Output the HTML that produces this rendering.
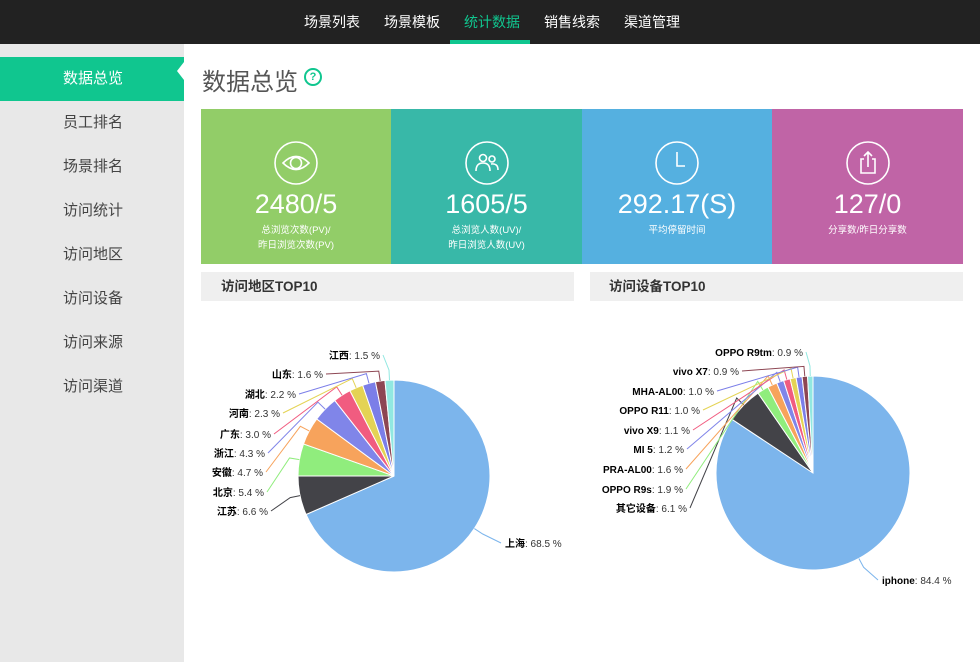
<!DOCTYPE html>
<html><head><meta charset="utf-8"><style>
*{margin:0;padding:0;box-sizing:border-box}
body{width:980px;height:662px;overflow:hidden;background:#fff;font-family:"Liberation Sans","Noto Sans CJK SC",sans-serif;position:relative}
.top{position:absolute;left:0;top:0;width:980px;height:44px;background:#222}
.top span{position:absolute;top:12px;color:#fff;font-size:14px}
.top .act{color:#10c68f}
.ul{position:absolute;left:450px;top:40px;width:80px;height:4px;background:#10c68f}
.side{position:absolute;left:0;top:44px;width:184px;height:618px;background:#e8e8e8}
.side div{position:absolute;left:0;width:184px;height:44px;line-height:44px;padding-left:63px;font-size:15px;color:#444}
.side .on{background:#10c68f;color:#fff}
.title{position:absolute;left:202px;top:62px;font-size:24px;color:#555}
.q{position:absolute;left:304px;top:68px;width:18px;height:18px;border:2px solid #10c68f;border-radius:50%;color:#10c68f;font-size:11px;text-align:center;line-height:14px;font-weight:bold}
.card{position:absolute;top:109px;height:155px;color:#fff;text-align:center}
.card svg{position:absolute;left:50%;top:32px;margin-left:-22px}
.num{position:absolute;left:0;right:0;top:80px;font-size:27px}
.sub{position:absolute;left:0;right:0;top:114px;font-size:9.5px;line-height:15px}
.hd{position:absolute;top:272px;height:29px;background:#efefef;font-weight:bold;font-size:13.5px;color:#333;line-height:29px}
</style></head><body>
<div class="top">
<span style="left:304px">场景列表</span><span style="left:384px">场景模板</span><span class="act" style="left:464px">统计数据</span><span style="left:544px">销售线索</span><span style="left:624px">渠道管理</span>
</div><div class="ul"></div>
<div class="side">
<div class="on" style="top:13px">数据总览</div>
<div style="top:57px">员工排名</div>
<div style="top:101px">场景排名</div>
<div style="top:145px">访问统计</div>
<div style="top:189px">访问地区</div>
<div style="top:233px">访问设备</div>
<div style="top:277px">访问来源</div>
<div style="top:321px">访问渠道</div>
</div>
<svg style="position:absolute;left:176px;top:62px" width="10" height="18"><path d="M8 0 L1 9 L8 18 L10 18 L10 0Z" fill="#fff"/></svg>
<div class="title">数据总览</div><div class="q">?</div>

<div class="card" style="left:201px;width:190px;background:#92cd68">
<svg width="44" height="44" viewBox="0 0 44 44" fill="none" stroke="#fff" stroke-width="1.6"><circle cx="22" cy="22" r="21"/><path d="M9 22 Q22 9 35 22 Q22 35 9 22Z"/><circle cx="22" cy="22" r="5.5"/></svg>
<div class="num">2480/5</div><div class="sub">总浏览次数(PV)/<br>昨日浏览次数(PV)</div></div>
<div class="card" style="left:391px;width:191px;background:#38b8a8">
<svg width="44" height="44" viewBox="0 0 44 44" fill="none" stroke="#fff" stroke-width="1.6"><circle cx="22" cy="22" r="21"/><circle cx="18" cy="17" r="3.5"/><circle cx="27" cy="18" r="3"/><path d="M11 30 Q11 22 18 22 Q25 22 25 30"/><path d="M26 23 Q33 22 33 29"/></svg>
<div class="num">1605/5</div><div class="sub">总浏览人数(UV)/<br>昨日浏览人数(UV)</div></div>
<div class="card" style="left:582px;width:190px;background:#55b0e0">
<svg width="44" height="44" viewBox="0 0 44 44" fill="none" stroke="#fff" stroke-width="1.6"><circle cx="22" cy="22" r="21"/><path d="M22 11 V25 H30"/></svg>
<div class="num">292.17(S)</div><div class="sub">平均停留时间</div></div>
<div class="card" style="left:772px;width:191px;background:#c064a6">
<svg width="44" height="44" viewBox="0 0 44 44" fill="none" stroke="#fff" stroke-width="1.6"><circle cx="22" cy="22" r="21"/><path d="M18 18 H15 V32 H29 V18 H26"/><path d="M22 26 V11 M18 15 L22 11 L26 15"/></svg>
<div class="num">127/0</div><div class="sub">分享数/昨日分享数</div></div>

<div class="hd" style="left:201px;width:373px;padding-left:20px">访问地区TOP10</div>
<div class="hd" style="left:590px;width:373px;padding-left:19px">访问设备TOP10</div>

<svg id="ch" style="position:absolute;left:0;top:0" width="980" height="662"></svg>
<script>
var ns="http://www.w3.org/2000/svg",s=document.getElementById('ch');
function el(t,a,tx){var e=document.createElementNS(ns,t);for(var k in a)e.setAttribute(k,a[k]);if(tx!=null)e.textContent=tx;s.appendChild(e);return e;}
function pie(cx,cy,r,d){
 var a=0,sum=d.reduce(function(p,c){return p+c[1]},0);
 d.forEach(function(x){
  var a0=a,a1=a+x[1]/sum*2*Math.PI;a=a1;
  var p=function(an,rr){return[cx+rr*Math.sin(an),cy-rr*Math.cos(an)]};
  var P0=p(a0,r),P1=p(a1,r),lg=(a1-a0)>Math.PI?1:0;
  el('path',{d:'M'+cx+' '+cy+'L'+P0+'A'+r+' '+r+' 0 '+lg+' 1 '+P1+'Z',fill:x[2],stroke:'#fff','stroke-width':1});
  var m=(a0+a1)/2,Q0=p(m,r),Q1=p(m,r+10),lx=x[3],ly=x[4],right=x[5];
  var ex=right?lx-4:lx+3;
  el('path',{d:'M'+Q0+'L'+Q1+'L'+ex+' '+(ly-4),fill:'none',stroke:x[2],'stroke-width':1});
  var t=el('text',{x:lx,y:ly,'font-size':10,'text-anchor':right?'start':'end',fill:'#000'});
  var b=document.createElementNS(ns,'tspan');b.setAttribute('font-weight','bold');b.textContent=x[0];t.appendChild(b);
  var n=document.createElementNS(ns,'tspan');n.setAttribute('fill','#333');n.textContent=': '+x[1].toFixed(1)+' %';t.appendChild(n);
 });
}
pie(394,476,96,[
['上海',68.5,'#7cb5ec',505,547,1],['江苏',6.6,'#434348',268,515],['北京',5.4,'#90ed7d',264,496],['安徽',4.7,'#f7a35c',263,476],
['浙江',4.3,'#8085e9',265,457],['广东',3.0,'#f15c80',271,438],['河南',2.3,'#e4d354',280,417],['湖北',2.2,'#7b7ee8',296,398],
['山东',1.6,'#8d4653',323,378],['江西',1.5,'#91e8e1',380,359]]);
pie(813,473,97,[
['iphone',84.4,'#7cb5ec',882,584,1],['其它设备',6.1,'#434348',687,512],['OPPO R9s',1.9,'#90ed7d',683,493],['PRA-AL00',1.6,'#f7a35c',683,473],
['MI 5',1.2,'#8085e9',684,453],['vivo X9',1.1,'#f15c80',690,434],['OPPO R11',1.0,'#e4d354',700,414],['MHA-AL00',1.0,'#7b7ee8',714,395],
['vivo X7',0.9,'#8d4653',739,375],['OPPO R9tm',0.9,'#91e8e1',803,356]]);
</script>
</body></html>
